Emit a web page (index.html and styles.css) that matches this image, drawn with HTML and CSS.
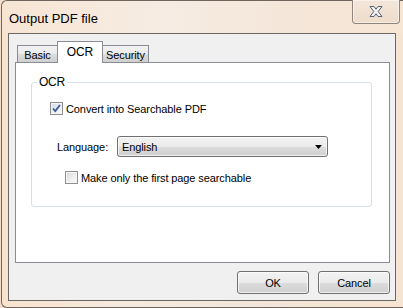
FILE: index.html
```html
<!DOCTYPE html>
<html>
<head>
<meta charset="utf-8">
<link rel="stylesheet" href="styles.css">
</head>
<body>
<div class="window">
  <div class="titlebar">
    <span class="title">Output PDF file</span>
    <div class="close-btn">
      <svg width="18" height="13" viewBox="0 0 18 13">
        <path d="M3 1.5 H7 L9 4.2 L11 1.5 H15 L11.2 6.5 L15 11.5 H11 L9 8.8 L7 11.5 H3 L6.8 6.5 Z" fill="#eef0f4" stroke="#5b6170" stroke-width="1" stroke-linejoin="round"/>
      </svg>
    </div>
  </div>
  <div class="client">
    <div class="tabs">
      <div class="tab tab-basic">Basic</div>
      <div class="tab tab-ocr active">OCR</div>
      <div class="tab tab-sec">Security</div>
    </div>
    <div class="panel">
      <fieldset class="group">
        <legend class="legend">OCR</legend>
        <div class="row row-convert">
          <span class="checkbox checked">
            <svg width="11" height="11" viewBox="0 0 11 11"><path d="M2 5.5 L4.3 8 L9 2" fill="none" stroke="#3c5a9a" stroke-width="1.8"/></svg>
          </span>
          <span class="label">Convert into Searchable PDF</span>
        </div>
        <div class="row row-lang">
          <span class="lang-label">Language:</span>
          <div class="select">
            <span class="select-text">English</span>
            <svg class="arrow" width="7" height="4" viewBox="0 0 7 4"><path d="M0 0 H7 L3.5 4 Z" fill="#000"/></svg>
          </div>
        </div>
        <div class="row row-first">
          <span class="checkbox"></span>
          <span class="label">Make only the first page searchable</span>
        </div>
      </fieldset>
    </div>
    <div class="buttons">
      <div class="btn">OK</div>
      <div class="btn">Cancel</div>
    </div>
  </div>
</div>
</body>
</html>
```
FILE: styles.css
```css
html, body {
  margin: 0;
  padding: 0;
  width: 403px;
  height: 308px;
  overflow: hidden;
  background: #f3dfcc;
}
body {
  font-family: "Liberation Sans", Arial, sans-serif;
  font-size: 11px;
  letter-spacing: -0.1px;
  color: #000;
}
.window {
  box-sizing: border-box;
  width: 404px;
  height: 308px;
  margin-left: 1px;
  border: 1px solid #6f655c;
  border-right: none;
  border-radius: 6px 0 0 6px;
  background: linear-gradient(to right, #f8e3cf 0%, #f6eadf 30%, #f3e6da 60%, #f6e4d2 100%);
  display: flex;
  flex-direction: column;
}
.titlebar {
  height: 32px;
  flex: none;
  display: flex;
  align-items: flex-start;
  justify-content: space-between;
  background: linear-gradient(to right, #f7e5d4 0%, #f6ece3 40%, #f4e6d9 70%, #f8e6d4 100%);
  border-radius: 6px 0 0 0;
}
.title {
  margin-left: 7px;
  margin-top: 10px;
  font-size: 13px;
  letter-spacing: 0;
  color: #000;
}
.close-btn {
  box-sizing: border-box;
  width: 48px;
  height: 24px;
  margin-top: -1px;
  margin-right: 5px;
  border: 1px solid #8f857c;
  border-top: none;
  border-radius: 0 0 4px 4px;
  background: linear-gradient(to bottom, #f3e6da, #efdccb);
  display: flex;
  align-items: center;
  justify-content: center;
  box-shadow: inset 0 0 0 1px rgba(255,255,255,0.5);
}
.client {
  box-sizing: border-box;
  width: 388px;
  height: 268px;
  margin-left: 6px;
  border: 1px solid #6b6864;
  background: #f0f0f0;
  padding: 7px 5px 0 6px;
  display: flex;
  flex-direction: column;
}
.tabs {
  display: flex;
  align-items: flex-end;
  height: 21px;
  padding-left: 2px;
  position: relative;
  z-index: 1;
}
.tab {
  box-sizing: border-box;
  height: 17px;
  border: 1px solid #898c95;
  border-bottom: none;
  background: linear-gradient(to bottom, #f2f2f2 0%, #ebebeb 50%, #dddddd 51%, #cfcfcf 100%);
  display: flex;
  align-items: center;
  justify-content: center;
  padding-top: 1px;
}
.tab-basic { width: 41px; }
.tab-ocr {
  width: 46px;
  margin-left: -1px;
  height: 22px;
  margin-bottom: -1px;
  background: #fff;
  padding-bottom: 3px;
  font-size: 12px;
}
.tab-sec { width: 47px; margin-left: -1px; }
.panel {
  box-sizing: border-box;
  width: 375px;
  height: 201px;
  border: 1px solid #898c95;
  background: #fff;
  padding: 12px 0 0 15px;
}
.group {
  box-sizing: border-box;
  margin: 0;
  width: 341px;
  height: 132px;
  border: 1px solid #d5dfe5;
  border-radius: 3px;
  padding: 0;
}
.legend {
  margin-left: 5px;
  padding: 0 2px;
  font-size: 12px;
  line-height: 14px;
  letter-spacing: -0.3px;
  color: #000;
}
.row {
  display: flex;
  align-items: center;
}
.row-convert {
  margin-top: 13px;
  margin-left: 18px;
  height: 13px;
}
.row-convert .label { margin-left: 3px; }
.row-lang {
  margin-top: 21px;
  margin-left: 25px;
  height: 21px;
}
.lang-label { width: 60px; }
.select {
  box-sizing: border-box;
  width: 211px;
  height: 21px;
  border: 1px solid #707070;
  border-radius: 3px;
  background: linear-gradient(to bottom, #f2f2f2 0%, #ebebeb 50%, #dddddd 51%, #cfcfcf 100%);
  display: flex;
  align-items: center;
  justify-content: space-between;
  padding: 0 5px 0 4px;
  box-shadow: inset 0 0 0 1px rgba(255,255,255,0.7);
}
.row-first {
  margin-top: 14px;
  margin-left: 33px;
  height: 13px;
}
.row-first .label { margin-left: 3px; }
.checkbox {
  box-sizing: border-box;
  width: 13px;
  height: 13px;
  flex: none;
  border: 1px solid #8e8f8f;
  background: linear-gradient(135deg, #d8d8d8 0%, #f0f0f0 60%, #fafafa 100%);
  box-shadow: inset 0 0 0 1px #f4f4f4;
  display: flex;
  align-items: center;
  justify-content: center;
}
.checkbox.checked {
  background: linear-gradient(135deg, #d3dbe8 0%, #eef2f8 70%, #f8f9fb 100%);
}
.buttons {
  display: flex;
  justify-content: flex-end;
  gap: 9px;
  margin-top: 8px;
}
.btn {
  box-sizing: border-box;
  width: 72px;
  height: 23px;
  border: 1px solid #707070;
  border-radius: 3px;
  background: linear-gradient(to bottom, #f2f2f2 0%, #ebebeb 50%, #dddddd 51%, #cfcfcf 100%);
  box-shadow: inset 0 0 0 1px rgba(255,255,255,0.7);
  display: flex;
  align-items: center;
  justify-content: center;
}
```
